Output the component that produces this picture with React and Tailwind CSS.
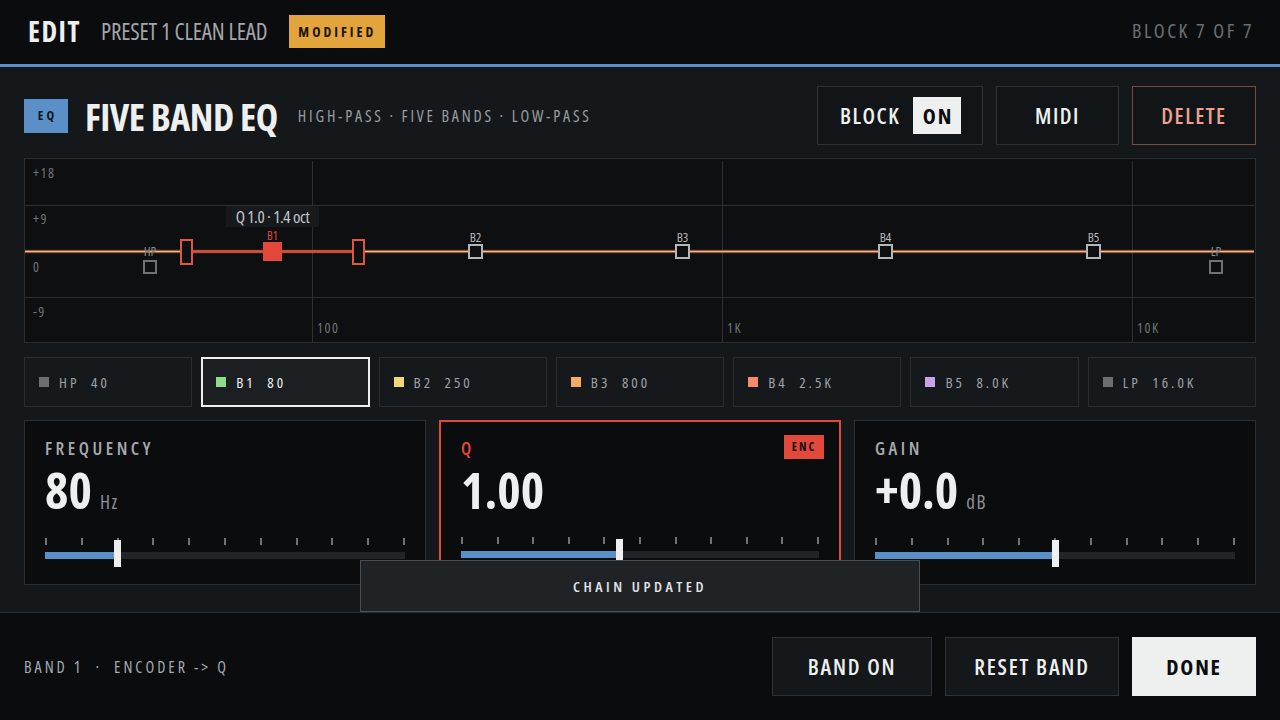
import React from 'react';

const BANDS = [
  { id: 'HP', value: '40', swatch: 'bg-[#6b6e72]' },
  { id: 'B1', value: '80', swatch: 'bg-[#8ddc8a]', active: true },
  { id: 'B2', value: '250', swatch: 'bg-[#f0d878]' },
  { id: 'B3', value: '800', swatch: 'bg-[#f5ac62]' },
  { id: 'B4', value: '2.5K', swatch: 'bg-[#f58c6c]' },
  { id: 'B5', value: '8.0K', swatch: 'bg-[#c9a0ea]' },
  { id: 'LP', value: '16.0K', swatch: 'bg-[#6b6e72]' },
];

// handle positions on the plot (the plot is a free canvas)
const HANDLES = [
  { label: 'HP', pos: 'left-[118px] top-[101px] w-[14px] h-[14px]', dim: true },
  { label: 'B2', pos: 'left-[443px] top-[85px] w-[15px] h-[15px]' },
  { label: 'B3', pos: 'left-[650px] top-[85px] w-[15px] h-[15px]' },
  { label: 'B4', pos: 'left-[853px] top-[85px] w-[15px] h-[15px]' },
  { label: 'B5', pos: 'left-[1061px] top-[85px] w-[15px] h-[15px]' },
  { label: 'LP', pos: 'left-[1184px] top-[101px] w-[14px] h-[14px]', dim: true },
];

const AXIS = [
  { text: '+18', pos: 'left-[8px] top-[7px]' },
  { text: '+9', pos: 'left-[8px] top-[53px]' },
  { text: '0', pos: 'left-[8px] top-[101px]' },
  { text: '-9', pos: 'left-[8px] top-[146px]' },
  { text: '100', pos: 'left-[292px] top-[162px]' },
  { text: '1K', pos: 'left-[702px] top-[162px]' },
  { text: '10K', pos: 'left-[1112px] top-[162px]' },
];

function Handle({ label, pos, dim }) {
  return (
    <div className={`absolute ${pos}`}>
      <div className={`w-full h-full border-2 bg-[#0d0f11] ${dim ? 'border-[#6e7275]' : 'border-[#b4b7ba]'}`} />
      <span
        className={`absolute left-1/2 -translate-x-1/2 bottom-full text-[13px] leading-none font-medium ${
          dim ? 'mb-[2px] text-[#8a8e92]' : 'mb-0 text-[#b4b7ba]'
        }`}
      >
        {label}
      </span>
    </div>
  );
}

function Slider({ fill, thumb }) {
  return (
    <div className="relative h-[29px]">
      <div className="absolute top-0 inset-x-0 flex justify-between">
        {Array.from({ length: 11 }).map((_, i) => (
          <div key={i} className="w-[2px] h-[7px] bg-[#6f7377]" />
        ))}
      </div>
      <div className="absolute top-[14px] inset-x-0 h-[7px] bg-[#222528]">
        <div className={`h-full bg-[#5b8fc7] ${fill}`} />
      </div>
      <div className={`absolute top-[2px] w-[7px] h-[27px] bg-[#eef0f0] ${thumb}`} />
    </div>
  );
}

function ParamCard({ label, value, unit, fill, thumb, active }) {
  return (
    <div
      className={`relative flex flex-col h-[165px] bg-[#0b0c0e] px-5 ${
        active ? 'border-2 border-[#e2493a] pt-[18px]' : 'border border-[#2a2e31] pt-[19px]'
      }`}
    >
      <div className={`text-[18px] leading-[16px] tracking-[3.5px] font-semibold ${active ? 'text-[#e2493a]' : 'text-[#a6aaae]'}`}>
        {label}
      </div>
      <div className="mt-[13px] flex items-baseline gap-[8px]">
        <span className="text-[50px] leading-[42px] font-bold text-[#eef0f0]">{value}</span>
        {unit && <span className="text-[19px] leading-none text-[#8e9296] tracking-[1.5px]">{unit}</span>}
      </div>
      <div className="mt-[26px]">
        <Slider fill={fill} thumb={thumb} />
      </div>
      {active && (
        <div className="absolute top-[13px] right-[15px] w-[40px] h-[24px] bg-[#e2493a] flex items-center justify-center text-[12px] font-bold tracking-[2px] text-[#1a0b08]">
          ENC
        </div>
      )}
    </div>
  );
}

export default function App() {
  return (
    <div className="w-[1280px] h-[720px] flex flex-col bg-[#0b0c0e] text-white overflow-hidden font-[family-name:'Open_Sans','Roboto_Condensed',sans-serif] font-stretch-condensed">
      {/* Top bar */}
      <div className="h-[64px] flex items-center px-7 pb-[2px] bg-[#0b0c0e]">
        <span className="text-[28px] leading-none font-bold tracking-[1.5px] text-[#eef0f0]">EDIT</span>
        <span className="ml-[20px] text-[23px] leading-none tracking-[-0.2px] text-[#a2a6aa]">PRESET 1 CLEAN LEAD</span>
        <span className="ml-[22px] h-[33px] w-[96px] flex items-center justify-center bg-[#e3a53b] text-[14px] font-bold tracking-[3px] text-[#1c1306]">
          MODIFIED
        </span>
        <span className="ml-auto text-[20px] leading-none tracking-[2.5px] text-[#6b6f73] mr-[-2px]">BLOCK 7 OF 7</span>
      </div>
      <div className="h-[3px] bg-[#5b8fc7]" />

      {/* Main */}
      <div className="relative flex-1 bg-[#15181a] px-6 pt-[19px] border-b border-[#2a2e31]">
        {/* Header */}
        <div className="flex items-center h-[59px]">
          <div className="w-[44px] h-[34px] bg-[#5b8fc7] flex items-center justify-center text-[13px] font-bold tracking-[3px] text-[#10161d] pl-[3px]">
            EQ
          </div>
          <span className="ml-[17px] text-[38px] font-bold leading-none tracking-[-0.5px] text-[#eef0f0]">FIVE BAND EQ</span>
          <span className="ml-[20px] text-[16px] font-medium tracking-[2.8px] text-[#9a9ea2]">HIGH-PASS · FIVE BANDS · LOW-PASS</span>
          <div className="ml-auto flex gap-[13px] h-full">
            <div className="w-[166px] h-full border border-[#2e3236] bg-[#121517] flex items-center pl-[22px] pr-[21px]">
              <span className="text-[22px] font-semibold tracking-[1.5px] text-[#eef0f0]">BLOCK</span>
              <span className="ml-auto w-[48px] h-[37px] bg-[#eef0f0] flex items-center justify-center text-[22px] font-bold tracking-[2px] text-[#0b0c0e] pl-[2px]">
                ON
              </span>
            </div>
            <div className="w-[123px] h-full border border-[#2e3236] bg-[#121517] flex items-center justify-center text-[22px] font-semibold tracking-[1.5px] text-[#eef0f0]">
              MIDI
            </div>
            <div className="w-[124px] h-full border border-[#7a4a42] bg-[#121517] flex items-center justify-center text-[22px] font-semibold tracking-[1.5px] text-[#eea08e]">
              DELETE
            </div>
          </div>
        </div>

        {/* Graph */}
        <div className="mt-[13px] h-[185px] border border-[#2a2e31] bg-[#0d0f11]">
          <div className="relative w-full h-full">
            <svg className="absolute inset-0" width="1229" height="183">
              <line x1="0" y1="46.5" x2="1229" y2="46.5" stroke="#2c3033" strokeWidth="1" />
              <line x1="0" y1="138.5" x2="1229" y2="138.5" stroke="#2c3033" strokeWidth="1" />
              <line x1="287.5" y1="2" x2="287.5" y2="183" stroke="#2c3033" strokeWidth="1" />
              <line x1="697.5" y1="2" x2="697.5" y2="183" stroke="#2c3033" strokeWidth="1" />
              <line x1="1107.5" y1="2" x2="1107.5" y2="183" stroke="#2c3033" strokeWidth="1" />
              <line x1="0" y1="92.5" x2="1229" y2="92.5" stroke="#d9743f" strokeWidth="3.5" opacity="0.45" />
              <line x1="0" y1="92.5" x2="1229" y2="92.5" stroke="#f6b58a" strokeWidth="1.6" />
              <line x1="161" y1="92.5" x2="333" y2="92.5" stroke="#e2493a" strokeWidth="2" />
            </svg>
            {AXIS.map(a => (
              <span key={a.text} className={`absolute ${a.pos} text-[14px] leading-none tracking-[1.5px] text-[#707478]`}>
                {a.text}
              </span>
            ))}

            {HANDLES.map(h => (
              <Handle key={h.label} {...h} />
            ))}

            {/* Q brackets */}
            <div className="absolute left-[155px] top-[80px] w-[13px] h-[26px] border-2 border-[#e0563f] bg-[#0d0f11]" />
            <div className="absolute left-[327px] top-[80px] w-[13px] h-[26px] border-2 border-[#e0563f] bg-[#0d0f11]" />

            {/* Selected band */}
            <div className="absolute left-[238px] top-[83px] w-[19px] h-[19px] bg-[#e2493a]">
              <span className="absolute bottom-full mb-[1px] left-1/2 -translate-x-1/2 text-[12px] leading-[11px] font-medium text-[#e2493a]">
                B1
              </span>
            </div>
            <div className="absolute left-[201px] top-[47px] w-[93px] h-[21px] bg-[#171a1d] flex items-center justify-center text-[17px] leading-none tracking-[-0.4px] text-[#c4c7ca] z-10">
              Q 1.0 · 1.4 oct
            </div>
          </div>
        </div>

        {/* Band chips */}
        <div className="mt-[14px] grid grid-cols-7 gap-[9px]">
          {BANDS.map(b => (
            <div
              key={b.id}
              className={`h-[50px] flex items-center ${
                b.active ? 'border-2 border-[#eef0f0] bg-[#1c1f22] pl-[13px]' : 'border border-[#2a2e31] bg-[#16191b] pl-[14px]'
              }`}
            >
              <div className={`w-[10px] h-[10px] ${b.swatch}`} />
              <span className={`ml-[10px] text-[15px] font-medium tracking-[3px] ${b.active ? 'text-[#eef0f0]' : 'text-[#9ea2a6]'}`}>
                {b.id}&nbsp;&nbsp;{b.value}
              </span>
            </div>
          ))}
        </div>

        {/* Parameter cards */}
        <div className="mt-[13px] grid grid-cols-3 gap-[13px]">
          <ParamCard label="FREQUENCY" value="80" unit="Hz" fill="w-[20%]" thumb="left-[calc(20%-3px)]" />
          <ParamCard label="Q" value="1.00" fill="w-[44%]" thumb="left-[calc(44%-3px)]" active />
          <ParamCard label="GAIN" value="+0.0" unit="dB" fill="w-[50%]" thumb="left-[calc(50%-3px)]" />
        </div>

        {/* Toast */}
        <div className="absolute left-1/2 -translate-x-1/2 bottom-0 w-[560px] h-[52px] bg-[#1f2326] border border-[#4a4f54] flex items-center justify-center text-[15px] font-semibold tracking-[3.5px] text-[#e2e4e6]">
          CHAIN UPDATED
        </div>
      </div>

      {/* Bottom bar */}
      <div className="h-[107px] flex items-center px-6 bg-[#0b0c0e]">
        <span className="text-[16px] font-medium tracking-[3px] text-[#a6aaae]">
          BAND 1&nbsp;&nbsp;·&nbsp;&nbsp;ENCODER -&gt; Q
        </span>
        <div className="ml-auto flex gap-[13px]">
          <div className="w-[160px] h-[59px] border border-[#2e3236] bg-[#15181a] flex items-center justify-center text-[22px] font-semibold tracking-[1.8px] text-[#eef0f0]">
            BAND ON
          </div>
          <div className="w-[174px] h-[59px] border border-[#2e3236] bg-[#15181a] flex items-center justify-center text-[22px] font-semibold tracking-[1.8px] text-[#eef0f0]">
            RESET BAND
          </div>
          <div className="w-[124px] h-[59px] bg-[#eef0f0] flex items-center justify-center text-[22px] font-bold tracking-[1.8px] text-[#0b0c0e]">
            DONE
          </div>
        </div>
      </div>
    </div>
  );
}
